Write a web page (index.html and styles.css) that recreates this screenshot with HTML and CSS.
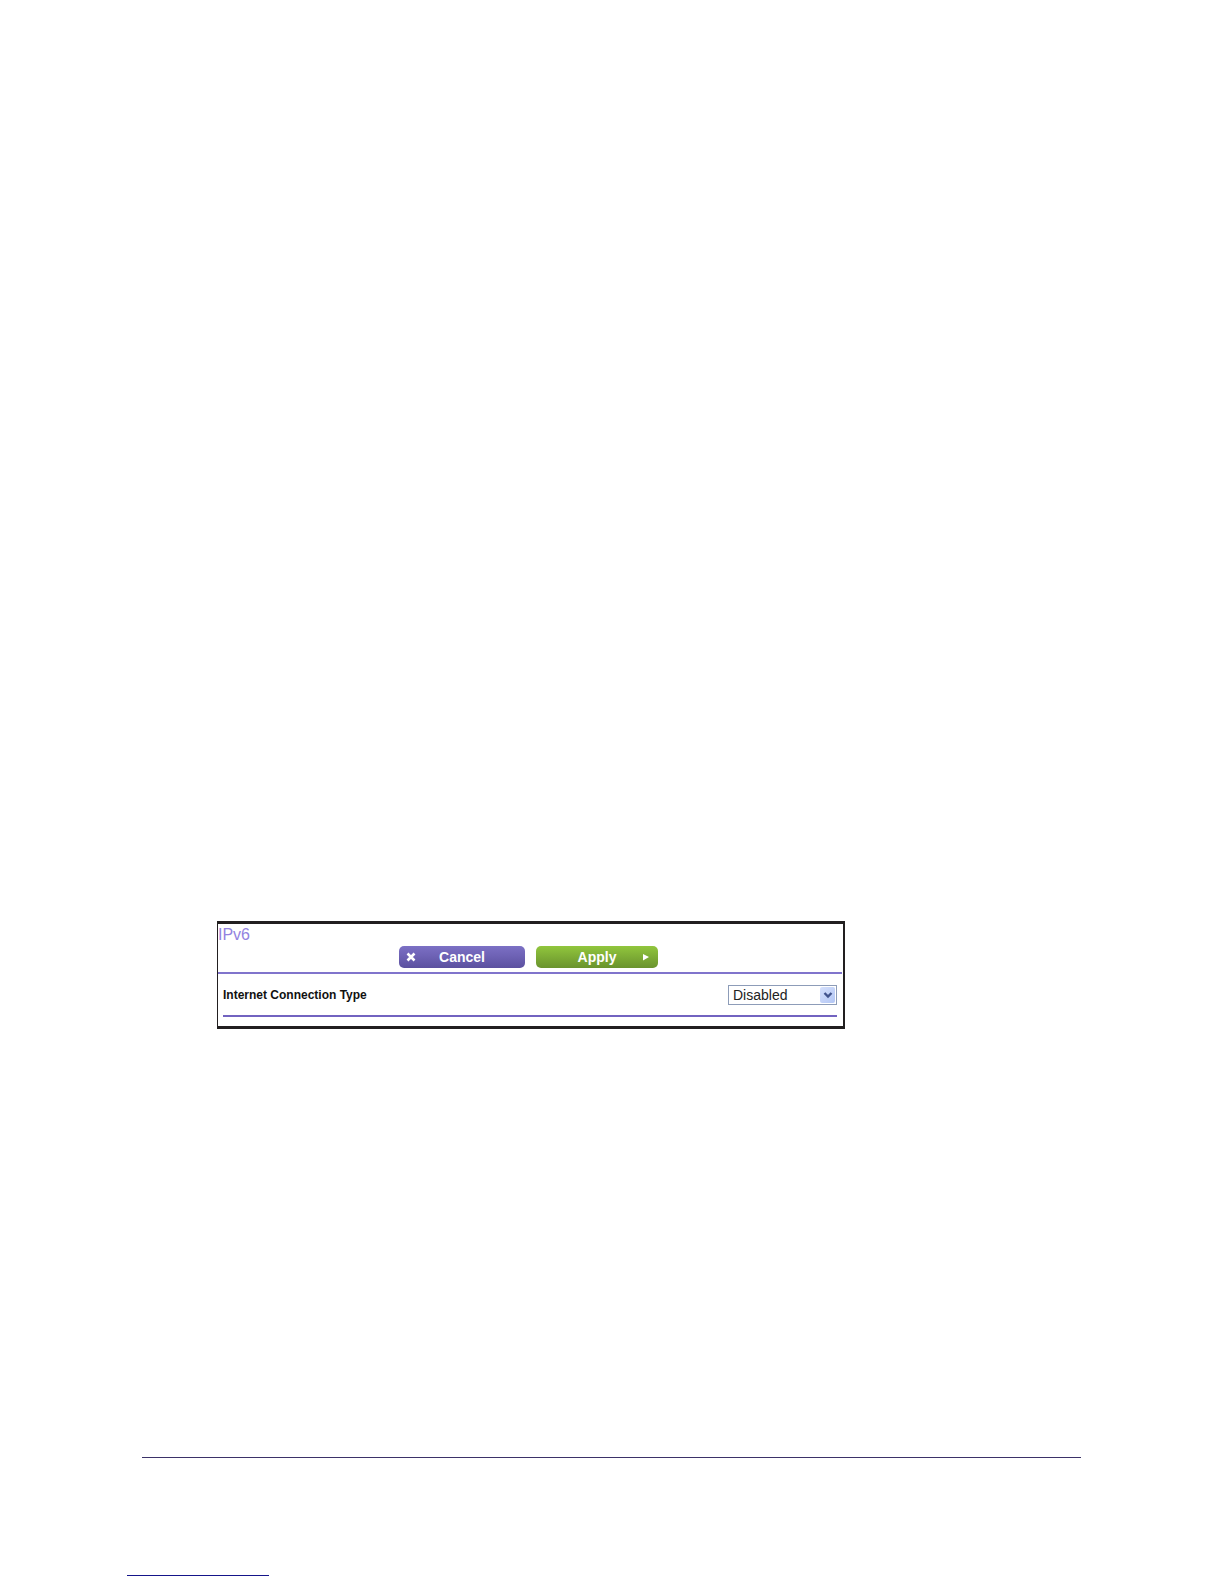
FILE: index.html
```html
<!DOCTYPE html>
<html lang="en">
<head>
<meta charset="utf-8">
<title>IPv6</title>
<link rel="stylesheet" href="styles.css">
</head>
<body>
<main class="page">
  <form class="panel">
    <header class="panel-head">
      <h1 class="title">IPv6</h1>
      <div class="actions">
        <button class="btn btn-cancel" type="button">
          <svg class="icon" viewBox="0 0 10 10" aria-hidden="true"><path d="M1.500 1.500L8.500 8.500M8.500 1.500L1.500 8.500" fill="none" stroke="#fff" stroke-width="2.600"/></svg>
          <span class="btn-text">Cancel</span>
        </button>
        <button class="btn btn-apply" type="submit">
          <span class="btn-text">Apply</span>
          <svg class="icon" viewBox="0 0 10 10" aria-hidden="true"><path d="M2 2L8 5L2 8.500Z" fill="#fff"/></svg>
        </button>
      </div>
    </header>
    <div class="row">
      <label class="label" for="connection-type">Internet Connection Type</label>
      <div class="select-box">
        <select class="select" id="connection-type">
          <option>Disabled</option>
        </select>
        <span class="arrow"><svg class="icon" viewBox="0 0 10 10" aria-hidden="true"><path d="M1.500 3L5 6.500L8.500 3" fill="none" stroke="#41538c" stroke-width="2.400"/></svg></span>
      </div>
    </div>
  </form>
</main>
<footer class="footer">
  <hr class="rule">
  <hr class="rule rule-short">
</footer>
</body>
</html>
```
FILE: styles.css
```css
* {
  box-sizing: border-box;
}

body {
  margin: 0;
  min-height: 100vh;
  display: flex;
  flex-direction: column;
  justify-content: space-between;
  background: #fff;
  color: #111;
  font-family: "Liberation Sans", Arial, sans-serif;
}

.page {
  padding: 921px 24px 0 217px;
}

.panel {
  max-width: 628px;
  border: 3px solid #221f20;
  border-left-width: 1px;
  border-right-width: 2px;
  padding-bottom: 9px;
}

.panel-head {
  margin-right: 1px;
  padding-bottom: 4px;
  border-bottom: 2px solid #8074cc;
}

.title {
  margin: 0;
  padding: 1px 0;
  font-size: 16px;
  line-height: 20px;
  font-weight: 400;
  color: #9383e0;
}

.actions {
  display: flex;
  justify-content: center;
  gap: 11px;
  padding-right: 3px;
}

.btn {
  display: flex;
  align-items: center;
  height: 22px;
  padding: 0 7px;
  border: 0;
  border-radius: 5px;
  color: #fff;
  font: bold 14px/22px "Liberation Sans", Arial, sans-serif;
}

.btn-cancel {
  width: 126px;
  padding-right: 17px;
  background: linear-gradient(#7b70c4, #6e62b5 45%, #5b509f);
}

.btn-apply {
  width: 122px;
  padding-left: 17px;
  background: linear-gradient(#91c63d, #7dac35 50%, #6a932e);
}

.btn-text {
  flex: 1;
  text-align: center;
}

.icon {
  flex: none;
  width: 10px;
  height: 10px;
}

.row {
  display: flex;
  justify-content: space-between;
  align-items: center;
  margin: 0 6px 0 5px;
  padding: 11px 0 10px;
  border-bottom: 2px solid #7263c0;
}

.label {
  font-size: 12px;
  line-height: 20px;
  font-weight: 700;
}

.select-box {
  display: grid;
  width: 109px;
  height: 20px;
}

.select,
.arrow {
  grid-area: 1 / 1;
}

.select {
  appearance: none;
  width: 100%;
  padding: 0 20px 0 4px;
  border: 1px solid #8d9cb8;
  border-radius: 0;
  background: #fff;
  color: #222;
  font: 14px/18px "Liberation Sans", Arial, sans-serif;
}

.arrow {
  justify-self: end;
  align-self: center;
  display: flex;
  align-items: center;
  justify-content: center;
  width: 15px;
  height: 16px;
  margin-right: 2px;
  border-radius: 2px;
  background: linear-gradient(135deg, #d5e0fc, #b3c6f4);
  pointer-events: none;
}

.footer {
  padding: 24px 143px 8px 142px;
}

.rule {
  height: 1px;
  margin: 0;
  border: 0;
  background: #3b3268;
}

.rule-short {
  width: 142px;
  margin: 117px 0 0 -15px;
  background: #15158a;
}
```
